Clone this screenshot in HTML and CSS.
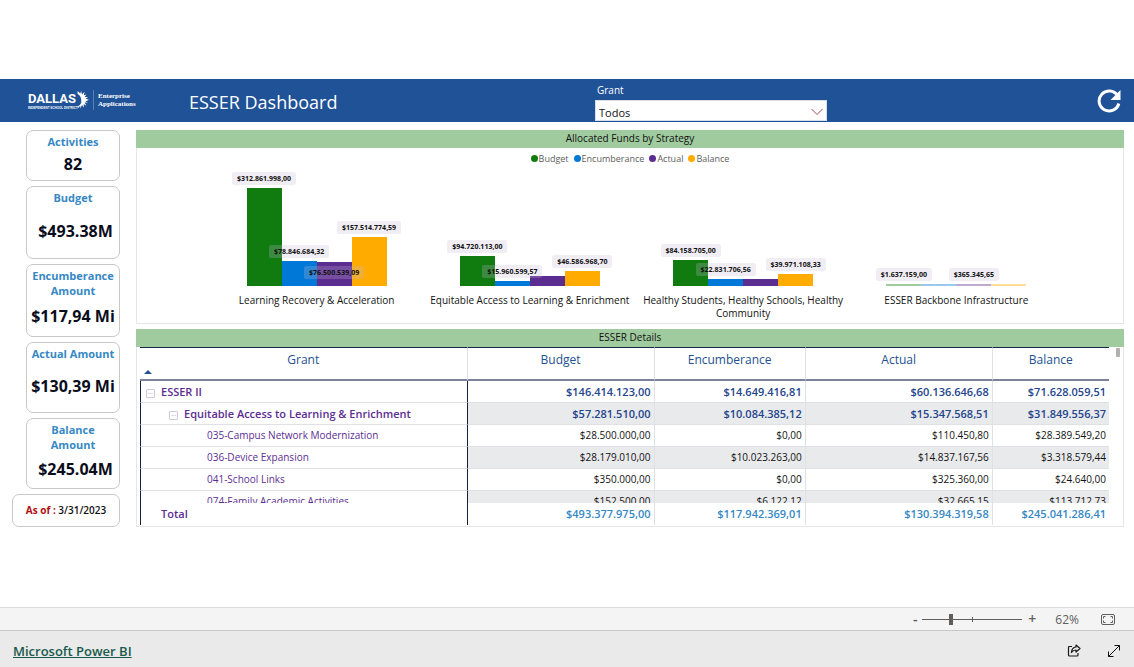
FILE: index.html
```html
<!DOCTYPE html>
<html lang="en">
<head>
<meta charset="utf-8">
<title>ESSER Dashboard</title>
<link rel="stylesheet" href="styles.css">
</head>
<body>
<main class="stage">
  <header class="banner">
    <div class="logo">
      <div class="logo-name">
        <span class="logo-word">DALLAS</span>
        <span class="logo-sub">INDEPENDENT SCHOOL DISTRICT</span>
      </div>
      <svg class="logo-star" width="14" height="21" viewBox="0 0 16 22" fill="#fff" aria-hidden="true">
        <path d="M0 1 3 3 3 0 6 3 7 0 8 4 11 1 10 5 13 4 11 7 15 7 12 9 16 10 12 12 15 14 11 13 13 17 10 15 10 19 8 16 6 20 6 17 3 20 4 17 0 19C6 17 8 14 7 10 7 6 4 4 0 1Z"/>
      </svg>
      <div class="logo-unit">Enterprise<br>Applications</div>
    </div>
    <h1 class="title">ESSER Dashboard</h1>
    <div class="slicer">
      <label class="slicer-label" for="grant">Grant</label>
      <div class="slicer-box">
        <select class="slicer-select" id="grant"><option>Todos</option></select>
        <svg class="slicer-arrow" width="12" height="8" viewBox="0 0 12 8" fill="none" stroke="#a04f48" aria-hidden="true"><path d="M.5 1 6 6.5 11.500 1"/></svg>
      </div>
    </div>
    <button class="refresh" type="button" aria-label="Refresh">
      <svg width="24" height="24" viewBox="0 0 24 24" fill="none" aria-hidden="true">
        <path d="M20.500 6.500A10 10 0 1 0 21.800 14.500" stroke="#fff" stroke-width="3"/>
        <path d="M23.500 1V11H13.500Z" fill="#fff"/>
      </svg>
    </button>
  </header>

  <div class="report">
    <aside class="cards">
      <section class="card card-xs"><h2 class="card-label">Activities</h2><p class="card-value">82</p></section>
      <section class="card card-inset"><h2 class="card-label">Budget</h2><p class="card-value">$493.38M</p></section>
      <section class="card"><h2 class="card-label">Encumberance Amount</h2><p class="card-value">$117,94 Mi</p></section>
      <section class="card card-s"><h2 class="card-label">Actual Amount</h2><p class="card-value">$130,39 Mi</p></section>
      <section class="card card-s card-inset"><h2 class="card-label">Balance<br>Amount</h2><p class="card-value">$245.04M</p></section>
      <p class="asof"><span class="asof-label">As of :</span> 3/31/2023</p>
    </aside>

    <div class="panels">
      <section class="panel">
        <h2 class="panel-title">Allocated Funds by Strategy</h2>
        <ul class="legend">
          <li class="legend-item"><i class="dot green"></i>Budget</li>
          <li class="legend-item"><i class="dot blue"></i>Encumberance</li>
          <li class="legend-item"><i class="dot purple"></i>Actual</li>
          <li class="legend-item"><i class="dot amber"></i>Balance</li>
        </ul>
        <div class="chart">
          <figure class="group">
            <div class="bars">
              <div class="bar green" style="height:98px"><span class="tag">$312.861.998,00</span></div>
              <div class="bar blue" style="height:25px"><span class="tag">$78.846.684,32</span></div>
              <div class="bar purple" style="height:24px"><span class="tag tag-inside">$76.500.539,09</span></div>
              <div class="bar amber" style="height:49px"><span class="tag">$157.514.774,59</span></div>
            </div>
            <figcaption class="category">Learning Recovery &amp; Acceleration</figcaption>
          </figure>
          <figure class="group">
            <div class="bars">
              <div class="bar green" style="height:30px"><span class="tag">$94.720.113,00</span></div>
              <div class="bar blue" style="height:5px"><span class="tag">$15.960.599,57</span></div>
              <div class="bar purple" style="height:10px"></div>
              <div class="bar amber" style="height:15px"><span class="tag">$46.586.968,70</span></div>
            </div>
            <figcaption class="category">Equitable Access to Learning &amp; Enrichment</figcaption>
          </figure>
          <figure class="group">
            <div class="bars">
              <div class="bar green" style="height:26px"><span class="tag">$84.158.705,00</span></div>
              <div class="bar blue" style="height:7px"><span class="tag">$22.831.706,56</span></div>
              <div class="bar purple" style="height:7px"></div>
              <div class="bar amber" style="height:12px"><span class="tag">$39.971.108,33</span></div>
            </div>
            <figcaption class="category">Healthy Students, Healthy Schools, Healthy Community</figcaption>
          </figure>
          <figure class="group">
            <div class="bars">
              <div class="bar green-pale" style="height:2px"><span class="tag">$1.637.159,00</span></div>
              <div class="bar blue-pale" style="height:2px"></div>
              <div class="bar purple-pale" style="height:2px"><span class="tag">$365.345,65</span></div>
              <div class="bar amber-pale" style="height:2px"></div>
            </div>
            <figcaption class="category">ESSER Backbone Infrastructure</figcaption>
          </figure>
        </div>
      </section>

      <section class="panel">
        <h2 class="panel-title">ESSER Details</h2>
        <div class="matrix">
          <table class="table">
            <colgroup><col class="c-grant"><col class="c-wide"><col class="c-mid"><col class="c-wide"><col class="c-narrow"></colgroup>
            <thead>
              <tr><th scope="col">Grant<span class="sort"></span></th><th scope="col">Budget</th><th scope="col">Encumberance</th><th scope="col">Actual</th><th scope="col">Balance</th></tr>
            </thead>
            <tbody>
              <tr class="strong"><th scope="row"><button class="toggle" type="button" aria-label="Collapse ESSER II"></button>ESSER II</th><td>$146.414.123,00</td><td>$14.649.416,81</td><td>$60.136.646,68</td><td>$71.628.059,51</td></tr>
              <tr class="strong"><th scope="row" class="level-2"><button class="toggle" type="button" aria-label="Collapse Equitable Access"></button>Equitable Access to Learning &amp; Enrichment</th><td>$57.281.510,00</td><td>$10.084.385,12</td><td>$15.347.568,51</td><td>$31.849.556,37</td></tr>
              <tr><th scope="row" class="level-3">035-Campus Network Modernization</th><td>$28.500.000,00</td><td>$0,00</td><td>$110.450,80</td><td>$28.389.549,20</td></tr>
              <tr><th scope="row" class="level-3">036-Device Expansion</th><td>$28.179.010,00</td><td>$10.023.263,00</td><td>$14.837.167,56</td><td>$3.318.579,44</td></tr>
              <tr><th scope="row" class="level-3">041-School Links</th><td>$350.000,00</td><td>$0,00</td><td>$325.360,00</td><td>$24.640,00</td></tr>
              <tr><th scope="row" class="level-3">074-Family Academic Activities</th><td>$152.500,00</td><td>$6.122,12</td><td>$32.665,15</td><td>$113.712,73</td></tr>
            </tbody>
            <tfoot>
              <tr><th scope="row">Total</th><td>$493.377.975,00</td><td>$117.942.369,01</td><td>$130.394.319,58</td><td>$245.041.286,41</td></tr>
            </tfoot>
          </table>
        </div>
        <span class="thumb"></span>
      </section>
    </div>
  </div>
</main>

<div class="zoombar">
  <button class="step" type="button" aria-label="Zoom out">-</button>
  <input class="slider" type="range" min="0" max="100" value="28" aria-label="Zoom">
  <button class="step" type="button" aria-label="Zoom in">+</button>
  <span class="percent">62%</span>
  <button class="icon-button" type="button" aria-label="Fit to page">
    <svg width="14" height="11" viewBox="0 0 14 11" fill="none" stroke="#605e5c" aria-hidden="true"><rect x=".5" y=".5" width="13" height="10" rx="1.500"/><path d="M2.500 4.500V2.500H4.500M9.500 2.500H11.500V4.500M11.500 6.500V8.500H9.500M4.500 8.500H2.500V6.500"/></svg>
  </button>
</div>

<footer class="footer">
  <a class="brand" href="#">Microsoft Power BI</a>
  <div class="footer-actions">
    <button class="icon-button" type="button" aria-label="Share">
      <svg width="14" height="13" viewBox="0 0 14 13" fill="none" stroke="#1b1a19" stroke-width="1.200" stroke-linejoin="round" aria-hidden="true"><path d="M5 2.500H2.500Q1.500 2.500 1.500 3.500V11Q1.500 12 2.500 12H10Q11 12 11 11V9"/><path d="M9 1 13 4.500 9 8V6Q6 6 4.500 8.500 4.700 3.500 9 3Z"/></svg>
    </button>
    <button class="icon-button" type="button" aria-label="Full screen">
      <svg width="14" height="14" viewBox="0 0 14 14" fill="none" stroke="#111" aria-hidden="true"><path d="M1.500 12.500 12.500 1.500M7.500 1.500H12.500V6.500M1.500 7.500V12.500H6.500"/></svg>
    </button>
  </div>
</footer>
</body>
</html>
```

FILE: styles.css
```css
* { box-sizing: border-box; }

body {
  margin: 0;
  min-height: 100vh;
  display: flex;
  flex-direction: column;
  background: #fff;
  color: #111;
  font-family: "Open Sans", "Noto Sans", sans-serif;
  font-size: 11px;
}

h1, h2, p, ul, figure { margin: 0; padding: 0; font-weight: 400; }
button { padding: 0; border: 0; background: none; font: inherit; color: inherit; }

.stage {
  flex: 1;
  display: flex;
  flex-direction: column;
  justify-content: center;
  padding-bottom: 2px;
}

/* Banner */
.banner {
  display: grid;
  grid-template-columns: 161px 406px 232px 1fr;
  padding: 0 12px 0 28px;
  height: 43px;
  background: #1f5297;
  color: #fff;
}
.logo { display: flex; align-items: center; }
.logo-name { display: flex; flex-direction: column; width: 47px; padding-top: 2px; }
.logo-word { font: bold 13px/14px Roboto, sans-serif; }
.logo-sub { font: bold 3px/4px "Liberation Sans", sans-serif; white-space: nowrap; }
.logo-star { flex: none; }
.logo-unit {
  margin-left: 4px;
  padding: 2px 0 2px 4px;
  border-left: 1px solid #5c80b3;
  font: bold 7px/8px "Liberation Serif", serif;
}
.title { align-self: center; padding-top: 4px; font-size: 18px; line-height: 24px; }
.slicer { display: flex; flex-direction: column; padding-top: 4px; }
.slicer-label { padding-left: 2px; font-size: 10px; line-height: 14px; }
.slicer-box { position: relative; margin-top: 3px; }
.slicer-select {
  display: block;
  width: 100%;
  height: 21px;
  padding: 4px 3px 0;
  border: 1px solid #d8dde6;
  border-radius: 0;
  appearance: none;
  background: #fff;
  color: #111;
  font: inherit;
  font-size: 11px;
}
.slicer-arrow { position: absolute; right: 4px; top: 8px; }
.refresh { justify-self: end; align-self: center; height: 26px; padding-right: 1px; padding-top: 2px; }

/* Report */
.report { display: flex; gap: 16px; padding: 8px 10px 0 12px; }
.cards { width: 108px; display: flex; flex-direction: column; align-items: flex-end; gap: 5px; }
.card {
  display: flex;
  flex-direction: column;
  width: 94px;
  min-height: 73px;
  padding: 3px 0 1px;
  border: 1px solid #c8c8c8;
  border-radius: 7px;
  text-align: center;
}
.card-xs { min-height: 51px; }
.card-s { min-height: 71px; }
.card-label { color: #3688c5; font-size: 11px; line-height: 15px; font-weight: 700; }
.card-value {
  flex: 1;
  display: flex;
  align-items: center;
  justify-content: center;
  color: #0a0d1c;
  font-size: 16px;
  line-height: 18px;
  font-weight: 700;
  white-space: nowrap;
}
.card-inset .card-value { padding-left: 5px; }
.asof {
  width: 100%;
  border: 1px solid #c8c8c8;
  border-radius: 7px;
  font-size: 10px;
  line-height: 31px;
  font-weight: 600;
  text-align: center;
}
.asof-label { color: #b01010; font-weight: 700; }

.panels { flex: 1; min-width: 0; display: flex; flex-direction: column; gap: 5px; }
.panel { position: relative; border: 1px solid #e6e6e6; border-top: 0; }
.panel-title {
  margin: 0 -1px;
  padding-bottom: 1px;
  background: #a0cb9f;
  line-height: 17px;
  font-size: 10px;
  text-align: center;
}

/* Chart */
.legend { display: flex; justify-content: center; gap: 5px; padding-top: 3px; list-style: none; color: #605e5c; font-size: 9px; line-height: 16px; }
.legend-item { display: flex; align-items: center; gap: 1px; }
.dot { width: 7px; height: 7px; border-radius: 50%; }
.green { background: #107c10; }
.blue { background: #0078d7; }
.purple { background: #5c2d91; }
.amber { background: #ffab00; }
.green-pale { background: #9fcb9f; }
.blue-pale { background: #99c9ef; }
.purple-pale { background: #beabd3; }
.amber-pale { background: #ffdd99; }

.chart { display: grid; grid-template-columns: repeat(4, 1fr); padding: 21px 60px 3px 73px; }
.bars { display: flex; align-items: flex-end; justify-content: center; height: 98px; }
.bar { position: relative; width: 35px; }
.tag {
  position: absolute;
  z-index: 1;
  left: 50%;
  bottom: 100%;
  margin-bottom: 3px;
  padding: 1px 5px 0;
  border-radius: 2px;
  transform: translateX(-50%);
  background: rgba(195, 183, 215, .25);
  font-size: 7px;
  line-height: 12px;
  font-weight: 700;
  white-space: nowrap;
}
.tag-inside { top: 4px; bottom: auto; }
.category { min-height: 26px; margin: 8px 4px 0; font-size: 10px; line-height: 13px; text-align: center; }

/* Matrix */
.matrix { height: 178px; margin: 0 14px 1px 3px; overflow: hidden; }
.table { width: 100%; table-layout: fixed; border-collapse: separate; border-spacing: 0; }
.c-grant { width: 33.8%; }
.c-wide { width: 19.3%; }
.c-mid { width: 15.6%; }
.c-narrow { width: 12%; }
.table th, .table td {
  height: 22px;
  padding: 0 3px 0 0;
  border-right: 1px solid #e0e1e4;
  border-bottom: 1px solid #e0e1e4;
  font-size: 10px;
  line-height: 21px;
  text-align: right;
  white-space: nowrap;
}
.table tr > :last-child { border-right: 0; }
.table thead th {
  position: relative;
  height: 34px;
  padding: 0 0 6px;
  border-top: 1px solid #1b2747;
  border-bottom: 2px solid #7c8299;
  color: #24508f;
  font-size: 12px;
  line-height: 24px;
  font-weight: 400;
  text-align: center;
}
.sort {
  position: absolute;
  left: 4px;
  bottom: 5px;
  border: solid transparent;
  border-width: 0 4px 4px;
  border-bottom-color: #24508f;
}
.table tbody th, .table tfoot th {
  padding-left: 20px;
  border-left: 1px solid #14203f;
  border-right: 1px solid #14203f;
  color: #5c2d91;
  font-weight: 400;
  text-align: left;
}
.table tbody .level-2 { padding-left: 43px; }
.table tbody .level-3 { padding-left: 66px; }
.table .strong th, .table .strong td { font-size: 11px; font-weight: 600; }
.table .strong td { color: #24458c; }
.table tbody tr:nth-child(even) td { background: #e9eaec; }
.toggle {
  width: 9px;
  height: 9px;
  margin: 0 6px 0 -15px;
  border: 1px solid #d3c8e0;
  border-radius: 1px;
  background: linear-gradient(#e4dcec, #e4dcec) center / 5px 1px no-repeat;
  vertical-align: -1px;
}
.table tfoot { position: sticky; bottom: 0; background: #fff; }
.table tfoot th, .table tfoot td { border-bottom: 0; font-size: 11px; font-weight: 600; }
.table tfoot td { color: #3688c5; }
.thumb { position: absolute; top: 19px; right: 3px; width: 4px; height: 9px; border-radius: 1px; background: #b3b0ad; }

/* Zoom bar */
.zoombar {
  display: flex;
  align-items: center;
  justify-content: flex-end;
  height: 23px;
  padding-right: 19px;
  border-top: 1px solid #dcdcdc;
  background: #f4f4f4;
  color: #605e5c;
  font-size: 12px;
}
.step { width: 8px; font-size: 14px; line-height: 20px; font-weight: 600; }
.slider {
  width: 100px;
  height: 13px;
  margin: 0 6px 0 3px;
  appearance: none;
  background:
    linear-gradient(#605e5c, #605e5c) center / 1px 5px no-repeat,
    linear-gradient(#605e5c, #605e5c) center / 100% 1px no-repeat;
}
.slider::-webkit-slider-thumb { appearance: none; width: 4px; height: 11px; background: #605e5c; }
.percent { margin: 0 22px 0 19px; }
.icon-button { display: flex; }

/* Footer */
.footer {
  display: flex;
  align-items: center;
  justify-content: space-between;
  height: 37px;
  padding: 3px 13px 0;
  border-top: 1px solid #c8c8c8;
  background: #eaeaea;
}
.brand { color: #185a4c; font-size: 13px; font-weight: 600; line-height: 18px; }
.footer-actions { display: flex; align-items: center; gap: 26px; }
```
